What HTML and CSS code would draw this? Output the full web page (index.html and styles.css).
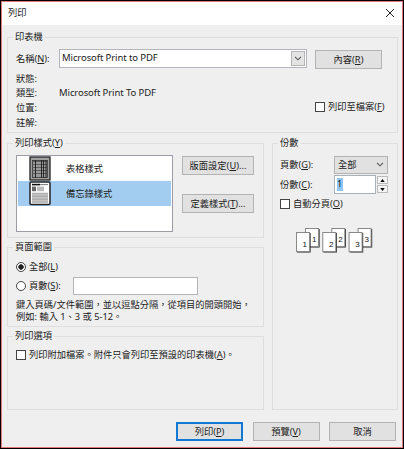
FILE: index.html
```html
<!DOCTYPE html>
<html lang="zh-Hant">
<head>
<meta charset="utf-8">
<title>列印</title>
<link rel="stylesheet" href="styles.css">
</head>
<body>
<div class="dialog">
  <header class="titlebar">
    <span>列印</span>
    <svg class="close" width="10" height="10" viewBox="0 0 10 10"><path d="M1 1L9 9M9 1L1 9"/></svg>
  </header>
  <main class="content">
    <fieldset class="group printer">
      <legend>印表機</legend>
      <div class="name-row">
        <span class="label">名稱(<u>N</u>):</span>
        <div class="combo"><span class="latin">Microsoft Print to PDF</span>
          <span class="combo-arrow"><svg width="8" height="5" viewBox="0 0 8 5"><path d="M1 .8L4 3.8L7 .8"/></svg></span>
        </div>
        <div class="button properties">內容(<u>R</u>)</div>
      </div>
      <div class="details">
        <dl class="info">
          <dt>狀態:</dt><dd></dd>
          <dt>類型:</dt><dd class="latin">Microsoft Print To PDF</dd>
          <dt>位置:</dt><dd></dd>
          <dt>註解:</dt><dd></dd>
        </dl>
        <div class="check to-file"><i class="box"></i><span>列印至檔案(<u>F</u>)</span></div>
      </div>
    </fieldset>

    <div class="columns">
      <div class="left">
        <fieldset class="group styles">
          <legend>列印樣式(<u>Y</u>)</legend>
          <div class="style-row">
            <div class="list">
              <div class="item">
                <svg width="22" height="25" viewBox="0 0 22 25">
                  <rect x="1" y="1" width="20" height="23" fill="#a2a2a2" stroke="#222" stroke-width="1.3"/>
                  <rect x="3.5" y="4.5" width="15" height="17" fill="#999" stroke="#333" stroke-width=".8"/>
                  <path d="M3 5.5H19M3 8.5H19M3 11.5H19M3 14.5H19M3 17.5H19" stroke="#555" stroke-width=".9"/>
                  <path d="M6.5 4V22M12.5 4V22M14.5 4V22M17 4V22" stroke="#1c1c1c" stroke-width=".9"/>
                </svg>
                <span>表格樣式</span>
              </div>
              <div class="item selected">
                <svg width="22" height="25" viewBox="0 0 22 25">
                  <rect x="1" y="1" width="20" height="22.5" rx="1" fill="#fff" stroke="#222" stroke-width="1.5"/>
                  <path d="M3 3.6H11" stroke="#111" stroke-width="1.6"/>
                  <path d="M11 3.6H19" stroke="#444" stroke-width=".7"/>
                  <rect x="3" y="5.6" width="4" height="4.6" fill="#666"/>
                  <rect x="8" y="5.6" width="7" height="4.6" fill="#bbb"/>
                  <rect x="3" y="12" width="16" height="9.5" fill="#c4c4c4"/>
                  <path d="M3 12.2H19M3 15.2H19M3 18.2H19M3 21.2H19" stroke="#999" stroke-width=".7"/>
                </svg>
                <span>備忘錄樣式</span>
              </div>
            </div>
            <div class="style-buttons">
              <div class="button">版面設定(<u>U</u>)...</div>
              <div class="button">定義樣式(<u>T</u>)...</div>
            </div>
          </div>
        </fieldset>

        <fieldset class="group range">
          <legend>頁面範圍</legend>
          <div class="radio all"><i class="dot on"></i><span>全部(<u>L</u>)</span></div>
          <div class="radio pages"><i class="dot"></i><span class="pages-label">頁數(<u>S</u>):</span><i class="field"></i></div>
          <p class="hint">鍵入頁碼/文件範圍，並以逗點分隔，從項目的開頭開始，<br>例如: 輸入 1、3 或 5-12。</p>
        </fieldset>

        <fieldset class="group options">
          <legend>列印選項</legend>
          <div class="check attach"><i class="box"></i><span>列印附加檔案。附件只會列印至預設的印表機(<u>A</u>)。</span></div>
        </fieldset>
      </div>

      <fieldset class="group copies">
        <legend>份數</legend>
        <div class="copy-row">
          <span class="copy-label">頁數(<u>G</u>):</span>
          <div class="select"><span>全部</span><svg width="8" height="5" viewBox="0 0 8 5"><path d="M1 .8L4 3.8L7 .8"/></svg></div>
        </div>
        <div class="copy-row count">
          <span class="copy-label">份數(<u>C</u>):</span>
          <div class="number"><mark>1</mark></div>
          <div class="spin">
            <span><svg width="5" height="3" viewBox="0 0 5 3"><path d="M.3 3L2.5 0L4.7 3z"/></svg></span>
            <span><svg width="5" height="3" viewBox="0 0 5 3"><path d="M.3 0L2.5 3L4.7 0z"/></svg></span>
          </div>
        </div>
        <div class="check collate"><i class="box"></i><span>自動分頁(<u>O</u>)</span></div>
        <svg class="sheets" width="78" height="26" viewBox="0 0 78 26">
          <g>
            <path class="shade" d="M10 19H23V1"/><rect x="9.5" y=".5" width="13" height="18"/><text x="16" y="14">1</text>
            <path class="shade" d="M1 24H14V5"/><rect x=".5" y="4.5" width="13" height="19"/><text x="6.6" y="19">1</text>
          </g>
          <g transform="translate(26.3 0)">
            <path class="shade" d="M10 19H23V1"/><rect x="9.5" y=".5" width="13" height="18"/><text x="16" y="14">2</text>
            <path class="shade" d="M1 24H14V5"/><rect x=".5" y="4.5" width="13" height="19"/><text x="6.6" y="19">2</text>
          </g>
          <g transform="translate(52.6 0)">
            <path class="shade" d="M10 19H23V1"/><rect x="9.5" y=".5" width="13" height="18"/><text x="16" y="14">3</text>
            <path class="shade" d="M1 24H14V5"/><rect x=".5" y="4.5" width="13" height="19"/><text x="6.6" y="19">3</text>
          </g>
        </svg>
      </fieldset>
    </div>
  </main>
  <footer class="actions">
    <div class="button primary">列印(<u>P</u>)</div>
    <div class="button">預覽(<u>V</u>)</div>
    <div class="button">取消</div>
  </footer>
</div>
</body>
</html>
```

FILE: styles.css
```css
* { box-sizing: border-box; }
body {
  margin: 0;
  background: #000;
  color: #222;
  font: 9.25px/12px "Noto Sans", "Noto Sans CJK TC", sans-serif;
  white-space: nowrap;
}
svg { display: block; flex: none; }
i { display: block; flex: none; }
u { text-underline-offset: 1px; text-decoration-thickness: 1px; }
.dialog {
  width: 404px;
  height: 449px;
  border: 1px solid #000;
  outline: 1px solid #e2787a;
  outline-offset: -2px;
  background: #efefef;
  display: flex;
  flex-direction: column;
}
.titlebar {
  height: 24px;
  padding: 0 8px 0 7px;
  display: flex;
  align-items: center;
  justify-content: space-between;
  background: #fff;
}
.close path { fill: none; stroke: #222; stroke-width: 1; }
.content { padding: 6px 5px 0 6px; }
.group {
  margin: 0;
  padding: 0 0 0 8px;
  border: 1px solid #dedede;
  min-width: 0;
}
legend { margin-left: -3px; padding: 0 2px; height: 12px; }
.button {
  display: flex;
  align-items: center;
  justify-content: center;
  width: 67px;
  height: 19px;
  background: #e1e1e1;
  border: 1px solid #b3b3b3;
}
.primary { border: 2px solid #1178d4; }

.printer { height: 102px; width: 391px; }
.name-row { display: flex; align-items: flex-start; margin-top: 6px; }
.label { width: 43px; padding-top: 4px; }
.combo {
  display: flex;
  align-items: center;
  justify-content: space-between;
  width: 248px;
  height: 19px;
  padding: 0 1px 1px 2px;
  background: #fff;
  border: 1px solid #b4b5bd;
}
.latin { font-size: 9.5px; letter-spacing: -.01em; }
.combo-arrow {
  display: flex;
  align-items: center;
  justify-content: center;
  width: 14px;
  height: 15px;
  background: #e4e4e4;
  border: 1px solid #b5b5b5;
}
.combo-arrow path, .select path { fill: none; stroke: #555; stroke-width: 1.1; }
.properties { margin: 1px 0 0 8px; }
.details { display: flex; }
.info {
  display: grid;
  grid-template-columns: 43px 256px;
  grid-auto-rows: 14.6px;
  align-items: center;
  margin: 2.5px 0 0;
}
.info dd { margin: 0; }
.check, .radio { display: flex; align-items: center; gap: 3px; height: 12px; }
.box { width: 10px; height: 10px; background: #fff; border: 1px solid #444; }
.to-file { margin-top: 32px; }

.columns { display: grid; grid-template-columns: 257px 126px; gap: 8px; margin-top: 4px; }
.left { display: grid; grid-template-rows: 101px 86px 80px; row-gap: 3px; }
.style-row { display: flex; gap: 9px; margin-top: 6px; }
.list { width: 157px; height: 77px; background: #fff; border: 1px solid #9b9ca6; }
.item { display: flex; align-items: center; gap: 15px; height: 25px; margin: 0 1px; padding-left: 11px; }
.selected { background: #a3cdf0; }
.style-buttons { display: grid; gap: 19px; align-content: start; padding-top: 1px; }
.style-buttons .button { width: 72px; }

.dot { width: 10px; height: 10px; border: 1px solid #444; border-radius: 50%; background: #fff; }
.on { background: radial-gradient(circle, #222 0 2.4px, #fff 3px); }
.all { margin-top: 8px; }
.pages { height: 18px; margin-top: 4px; }
.pages-label { width: 41px; }
.field { width: 125px; height: 18px; background: #fff; border: 1px solid #b4b5b9; }
.hint { margin: 4px 0 0; }
.attach { margin-top: 7px; }

.copies { height: 273px; padding-left: 7px; }
.copies legend { margin-left: -2px; }
.copy-row { display: flex; align-items: center; height: 19px; margin-top: 6px; }
.copy-label { width: 54px; }
.select {
  display: flex;
  align-items: center;
  justify-content: space-between;
  width: 54px;
  height: 18px;
  padding: 0 3px;
  background: #e1e1e1;
  border: 1px solid #b3b3b3;
}
.count { margin-top: 1px; }
.number { width: 42px; height: 19px; padding: 2px; background: #fff; border: 1px solid #aab0b8; }
mark { display: inline-block; height: 13px; width: 6px; color: #222; background: #8fc4f3; }
.spin { display: grid; gap: 1px; margin-left: 1px; }
.spin span {
  display: flex;
  align-items: center;
  justify-content: center;
  width: 11px;
  height: 8px;
  background: #f4f4f4;
  border: 1px solid #bbb;
}
.collate { margin-top: 4px; }
.sheets { margin: 18px 0 0 16px; }
.sheets rect { fill: #fff; stroke: #888; stroke-width: 1; }
.sheets .shade { fill: none; stroke: #222; stroke-width: 1.2; }
.sheets text { font: 8px "Liberation Sans", sans-serif; fill: #111; }

.actions { display: flex; gap: 9.5px; margin: 12px 0 0 175px; }
```
